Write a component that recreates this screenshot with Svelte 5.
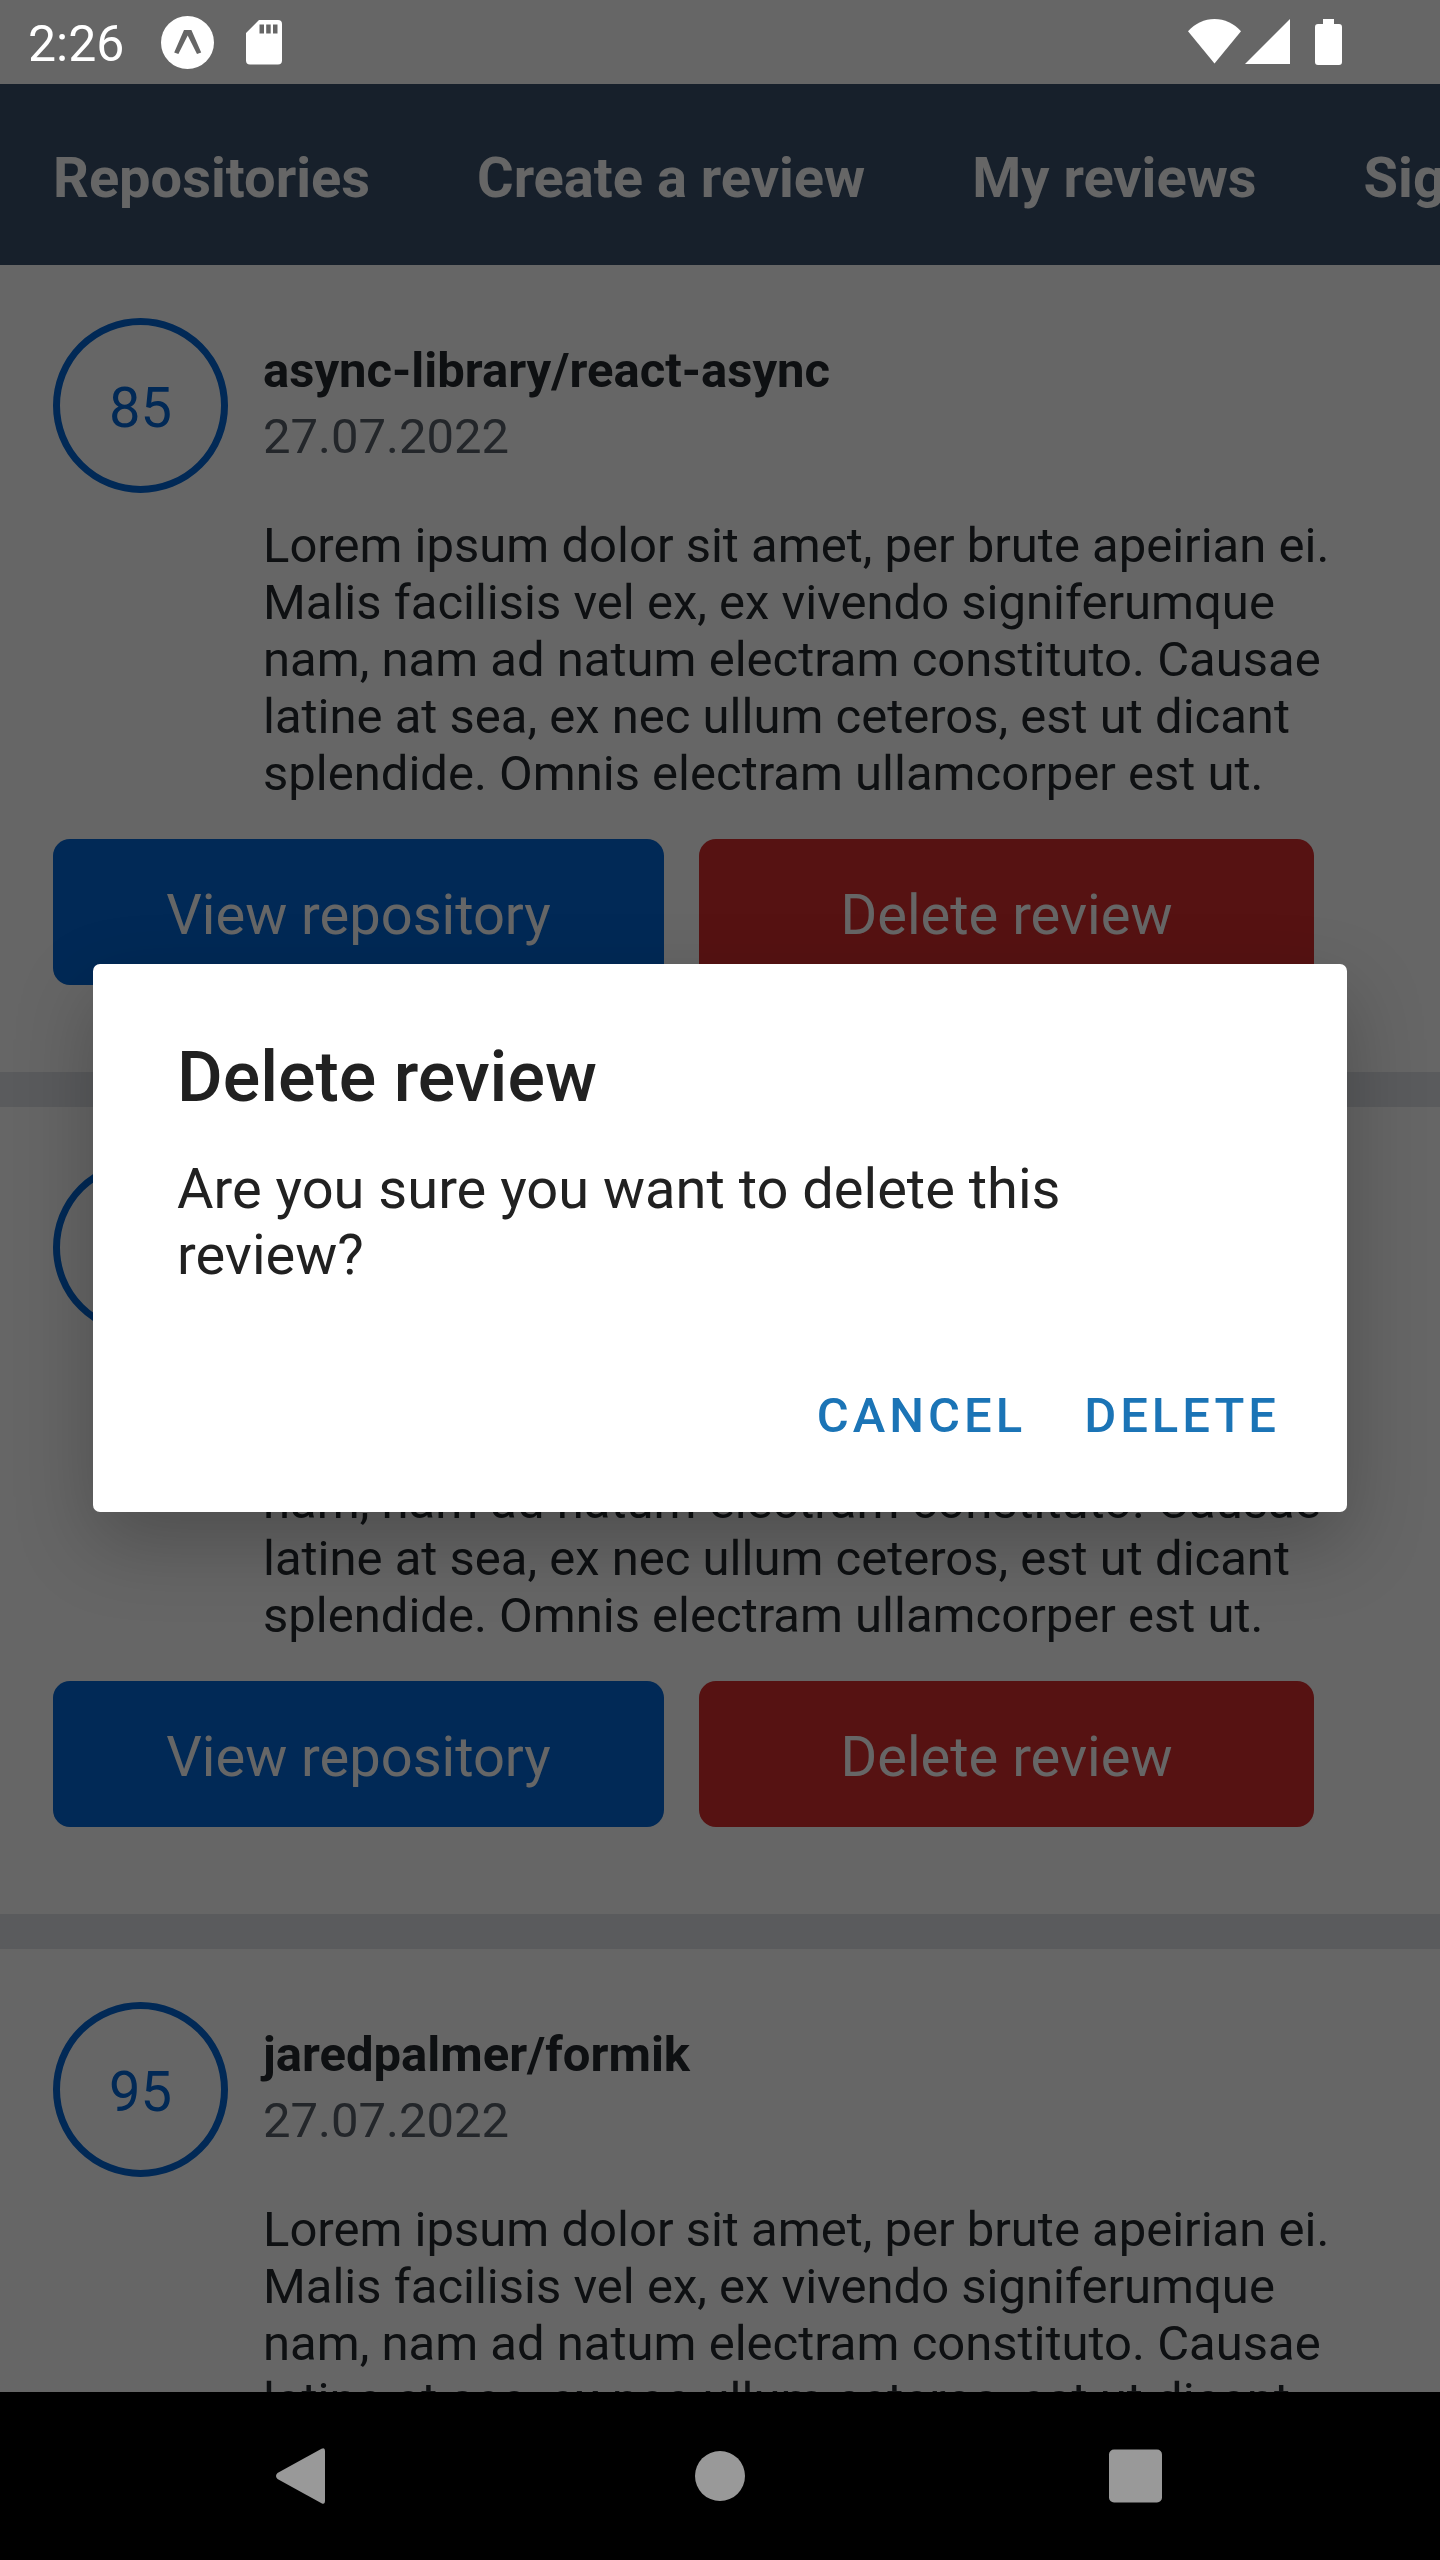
<script>
  const tabs = ['Repositories', 'Create a review', 'My reviews', 'Sign out'];
  const text =
    'Lorem ipsum dolor sit amet, per brute apeirian ei. Malis facilisis vel ex, ex vivendo signiferumque nam, nam ad natum electram constituto. Causae latine at sea, ex nec ullum ceteros, est ut dicant splendide. Omnis electram ullamcorper est ut.';
  let reviews = $state([
    { id: 1, rating: 85, name: 'async-library/react-async', date: '27.07.2022', text },
    { id: 2, rating: 90, name: 'rails/rails', date: '27.07.2022', text },
    { id: 3, rating: 95, name: 'jaredpalmer/formik', date: '27.07.2022', text }
  ]);
  let selected = $state(2);

  function close() {
    selected = null;
  }
  function remove() {
    reviews = reviews.filter((r) => r.id !== selected);
    selected = null;
  }
</script>

<div class="screen">
  <div class="status">
    <span class="time">2:26</span>
    <svg class="expo" width="53" height="53" viewBox="0 0 53 53" aria-hidden="true">
      <circle cx="26.5" cy="26.5" r="26.5" fill="#fff" />
      <path d="M23 14h7.400l9.800 22.400-4.200 1.600-9.300-18.500-9.300 18.500-4.200-1.600z" fill="#666" />
    </svg>
    <svg width="36" height="45" viewBox="0 0 36 45" aria-hidden="true">
      <path
        fill="#fff"
        fill-rule="evenodd"
        d="M13 0h19a4 4 0 0 1 4 4v36.500a4 4 0 0 1-4 4H4a4 4 0 0 1-4-4V13zM13.500 4.500v9h4.500v-9zM20.200 4.500v9h4.500v-9zM27 4.500v9h4.500v-9z"
      />
    </svg>
    <div class="system">
      <svg width="53" height="46" viewBox="0 0 53 46" aria-hidden="true">
        <path d="M0 12.300C7 4.500 16.500 0 26.500 0S46 4.500 53 12.300L26.500 44.500z" fill="#fff" />
      </svg>
      <svg class="signal" width="45" height="46" viewBox="0 0 45 46" aria-hidden="true">
        <path d="M0 45L45 0v45z" fill="#fff" />
      </svg>
      <svg width="27" height="46" viewBox="0 0 27 46" aria-hidden="true">
        <path
          d="M8 0h11v5h5a3 3 0 0 1 3 3v35a3 3 0 0 1-3 3H3a3 3 0 0 1-3-3V8a3 3 0 0 1 3-3h5z"
          fill="#fff"
        />
      </svg>
    </div>
  </div>

  <nav class="tabs">
    {#each tabs as tab}
      <a href="#{tab.toLowerCase().replaceAll(' ', '-')}">{tab}</a>
    {/each}
  </nav>

  <main class="list">
    {#each reviews as review (review.id)}
      <article class="card">
        <div class="rating">{review.rating}</div>
        <div class="info">
          <h2>{review.name}</h2>
          <time>{review.date}</time>
          <p>{review.text}</p>
        </div>
        <div class="actions">
          <button class="view" type="button">View repository</button>
          <button class="delete" type="button" onclick={() => (selected = review.id)}>Delete review</button>
        </div>
      </article>
    {/each}
  </main>

  {#if selected !== null}
    <div class="scrim">
      <div class="dialog" role="dialog" aria-modal="true" aria-labelledby="dialog-title">
        <h1 id="dialog-title">Delete review</h1>
        <p>Are you sure you want to delete this review?</p>
        <div class="choices">
          <button type="button" onclick={close}>CANCEL</button>
          <button type="button" onclick={remove}>DELETE</button>
        </div>
      </div>
    </div>
  {/if}

  <footer class="system-nav">
    <button type="button" aria-label="Back">
      <svg width="56" height="56" viewBox="0 0 56 56">
        <path d="M1.500 25L45.500 .8Q49 -1 49 3v50q0 4-3.500 2.200L1.500 31Q-1.500 28 1.500 25z" fill="#999" />
      </svg>
    </button>
    <button type="button" aria-label="Home">
      <svg width="56" height="56" viewBox="0 0 56 56"><circle cx="28" cy="28" r="25" fill="#999" /></svg>
    </button>
    <button type="button" aria-label="Recent apps">
      <svg width="56" height="56" viewBox="0 0 56 56">
        <rect x="1" y="1.500" width="53" height="53" rx="5" fill="#999" />
      </svg>
    </button>
  </footer>
</div>

<style>
  :global(body) {
    margin: 0;
    background: #000;
  }
  .screen {
    position: relative;
    display: flex;
    flex-direction: column;
    height: 100vh;
    overflow: hidden;
    background: #fff;
    font-family: Roboto, 'Liberation Sans', sans-serif;
    color: #24292e;
  }
  h1,
  h2,
  p {
    margin: 0;
  }
  button {
    margin: 0;
    padding: 0;
    border: 0;
    background: none;
    font: inherit;
    cursor: pointer;
  }
  svg {
    display: block;
    flex: none;
  }

  .status {
    position: relative;
    z-index: 2;
    flex: none;
    display: flex;
    align-items: center;
    height: 84px;
    padding: 0 98px 0 28px;
    color: #fff;
    font-size: 50px;
    line-height: 84px;
  }
  .time {
    padding-top: 4px;
  }
  .expo {
    margin: 0 32px 0 37px;
  }
  .system {
    display: flex;
    margin-left: auto;
  }
  .signal {
    margin: 0 25px 0 4px;
  }

  .tabs {
    flex: none;
    display: flex;
    gap: 107px;
    padding: 61px 53px 54px;
    background: #3a506b;
    overflow: hidden;
    white-space: nowrap;
  }
  .tabs a {
    color: #fff;
    font-size: 56px;
    font-weight: 700;
    line-height: 66px;
    text-decoration: none;
  }

  .list {
    flex: 1;
    min-height: 0;
    display: flex;
    flex-direction: column;
    gap: 35px;
    overflow: hidden;
    background: #e1e4e8;
  }
  .card {
    flex: none;
    display: grid;
    grid-template-columns: 175px 1fr;
    column-gap: 35px;
    padding: 53px 53px 87px;
    background: #fff;
  }
  .rating {
    box-sizing: border-box;
    display: grid;
    place-items: center;
    width: 175px;
    height: 175px;
    padding-top: 4px;
    border: 7px solid #0366d6;
    border-radius: 50%;
    color: #0366d6;
    font-size: 56px;
  }
  .info {
    display: flex;
    flex-direction: column;
    padding-top: 24px;
    font-size: 49px;
    line-height: 57px;
  }
  h2 {
    padding-bottom: 9px;
    font-size: 49px;
    font-weight: 700;
    line-height: 57px;
  }
  time {
    padding-bottom: 52px;
    color: #586069;
  }
  .actions {
    grid-column: 1 / -1;
    display: grid;
    grid-template-columns: 611fr 615fr;
    gap: 35px;
    padding: 37px 73px 0 0;
  }
  .actions button {
    height: 146px;
    padding-top: 6px;
    border-radius: 17px;
    color: #fff;
    font-size: 56px;
  }
  .view {
    background: #0366d6;
  }
  .delete {
    background: #d62d2d;
  }

  .scrim {
    position: absolute;
    inset: 0 0 168px;
    z-index: 1;
    display: flex;
    align-items: center;
    padding: 84px 93px 0;
    background: rgba(0, 0, 0, 0.6);
  }
  .dialog {
    flex: 1;
    padding: 77px 39px 46px 84px;
    border-radius: 7px;
    background: #fff;
    box-shadow: 0 30px 80px rgba(0, 0, 0, 0.24);
    color: #212121;
  }
  h1 {
    padding-bottom: 43px;
    font-size: 70px;
    font-weight: 500;
    line-height: 72px;
  }
  .dialog p {
    padding: 0 100px 78px 0;
    font-size: 56px;
    line-height: 66px;
  }
  .choices {
    display: flex;
    justify-content: flex-end;
    gap: 2px;
  }
  .choices button {
    padding: 0 28px;
    color: #1b74b6;
    font-size: 49px;
    font-weight: 500;
    line-height: 100px;
    letter-spacing: 4px;
  }

  .system-nav {
    flex: none;
    display: grid;
    grid-template-columns: repeat(3, 1fr);
    height: 168px;
    padding: 0 96px;
    background: #000;
  }
  .system-nav button {
    display: grid;
    place-items: center;
  }
</style>
